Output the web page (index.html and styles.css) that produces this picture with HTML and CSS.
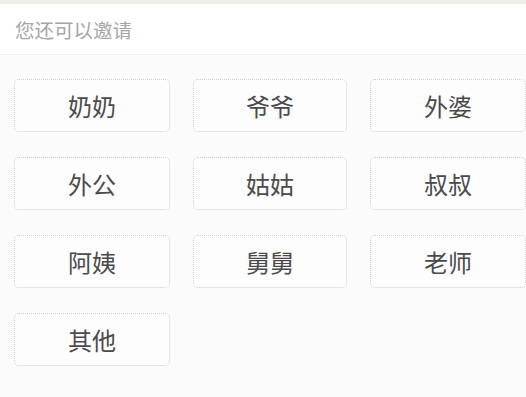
FILE: index.html
```html
<!DOCTYPE html>
<html lang="zh">
<head>
<meta charset="utf-8">
<link rel="stylesheet" href="styles.css">
</head>
<body>
<div class="topstrip"></div>
<div class="header">您还可以邀请</div>
<div class="grid">
  <div class="item">奶奶</div>
  <div class="item">爷爷</div>
  <div class="item">外婆</div>
  <div class="item">外公</div>
  <div class="item">姑姑</div>
  <div class="item">叔叔</div>
  <div class="item">阿姨</div>
  <div class="item">舅舅</div>
  <div class="item">老师</div>
  <div class="item">其他</div>
</div>
</body>
</html>
```
FILE: styles.css
```css
html, body {
  margin: 0;
  padding: 0;
}
body {
  width: 526px;
  height: 397px;
  overflow: hidden;
  background: #fbfbfb;
  font-family: "Noto Sans CJK SC", "Noto Sans", sans-serif;
}
.topstrip {
  height: 4px;
  background: #f1efec;
}
.header {
  height: 51px;
  box-sizing: border-box;
  background: #ffffff;
  border-bottom: 1px solid #efefef;
  padding-left: 15px;
  display: flex;
  align-items: center;
  font-size: 19.5px;
  color: #a6a6a6;
}
.grid {
  display: grid;
  grid-template-columns: 156px 154px 156px;
  column-gap: 23px;
  row-gap: 25px;
  padding: 24px 0 0 14px;
}
.item {
  height: 53px;
  box-sizing: border-box;
  border: 1px dotted #cdcdcd;
  border-radius: 5px;
  background: #fdfdfd;
  display: flex;
  align-items: center;
  justify-content: center;
  font-size: 24px;
  color: #4a4a4a;
}
```
